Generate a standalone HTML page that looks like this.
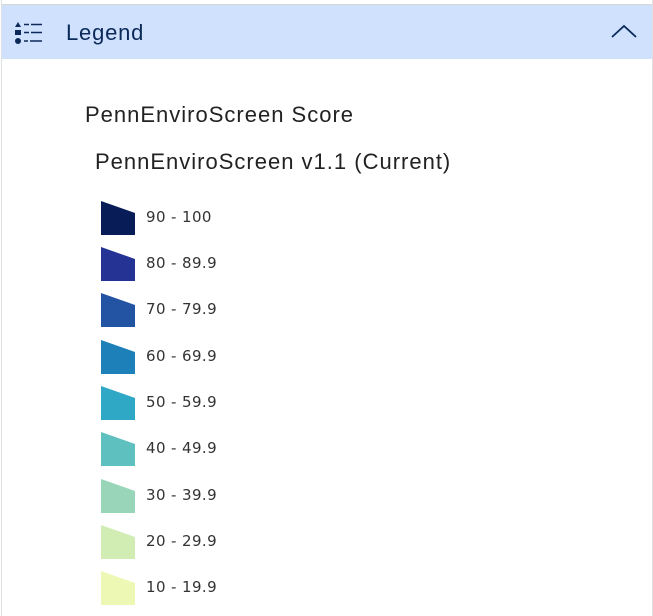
<!DOCTYPE html>
<html><head><style>
body{margin:0;width:653px;height:616px;background:#fff;overflow:hidden;font-family:"Liberation Sans",sans-serif;position:relative}
.frame{position:absolute;left:1px;top:0;width:650px;height:616px;border-left:1px solid #e0e0e0;border-right:1px solid #e0e0e0}
.hdr{position:absolute;left:2px;top:4px;width:650px;height:54px;background:#cfe1fd;border-top:1px solid #d8d8d8}
.ttl{position:absolute;left:64px;top:15px;font-size:22px;letter-spacing:0.8px;color:#0b2a5a}
.t1{position:absolute;left:85px;top:102px;font-size:22px;letter-spacing:1px;color:#222}
.t2{position:absolute;left:95px;top:149px;font-size:22px;letter-spacing:1px;color:#222}
.row{position:absolute;left:101px;height:34px}
.row svg{position:absolute;left:0;top:0}
.row span{position:absolute;left:45px;top:7px;color:#333;white-space:nowrap;font-family:"DejaVu Sans","Liberation Sans",sans-serif;font-size:15px;letter-spacing:0.4px}
</style></head><body>
<div class="frame"></div>
<div class="hdr">
<svg style="position:absolute;left:12px;top:16px" width="30" height="28" viewBox="0 0 30 28">
<path d="M1 6 L4 1 L7 6Z" fill="#0b2a5a"/><rect x="1" y="9" width="6" height="5" fill="#0b2a5a"/><circle cx="4" cy="20" r="3" fill="#0b2a5a"/>
<g stroke="#0b2a5a" stroke-width="1.5"><path d="M10 3.5h5M17 3.5h11M10 11.5h5M17 11.5h11M10 20h4M16 20h12"/></g>
</svg>
<div class="ttl">Legend</div>
<svg style="position:absolute;left:608px;top:18px" width="28" height="16" viewBox="0 0 28 16"><path d="M2 14 L14 3 L26 14" fill="none" stroke="#0b2a5a" stroke-width="1.8"/></svg>
</div>
<div class="t1">PennEnviroScreen Score</div>
<div class="t2">PennEnviroScreen v1.1 (Current)</div>
<div class="row" style="top:201px"><svg width="35" height="34"><path d="M0 0L34 12V34H0Z" fill="#081d58"/></svg><span>90 - 100</span></div>
<div class="row" style="top:247px"><svg width="35" height="34"><path d="M0 0L34 12V34H0Z" fill="#253494"/></svg><span>80 - 89.9</span></div>
<div class="row" style="top:293px"><svg width="35" height="34"><path d="M0 0L34 12V34H0Z" fill="#2353a3"/></svg><span>70 - 79.9</span></div>
<div class="row" style="top:340px"><svg width="35" height="34"><path d="M0 0L34 12V34H0Z" fill="#1e80b8"/></svg><span>60 - 69.9</span></div>
<div class="row" style="top:386px"><svg width="35" height="34"><path d="M0 0L34 12V34H0Z" fill="#2fa8c6"/></svg><span>50 - 59.9</span></div>
<div class="row" style="top:432px"><svg width="35" height="34"><path d="M0 0L34 12V34H0Z" fill="#5fc0c0"/></svg><span>40 - 49.9</span></div>
<div class="row" style="top:479px"><svg width="35" height="34"><path d="M0 0L34 12V34H0Z" fill="#99d6b9"/></svg><span>30 - 39.9</span></div>
<div class="row" style="top:525px"><svg width="35" height="34"><path d="M0 0L34 12V34H0Z" fill="#d2edb3"/></svg><span>20 - 29.9</span></div>
<div class="row" style="top:571px"><svg width="35" height="34"><path d="M0 0L34 12V34H0Z" fill="#eef8b5"/></svg><span>10 - 19.9</span></div>
</body></html>
